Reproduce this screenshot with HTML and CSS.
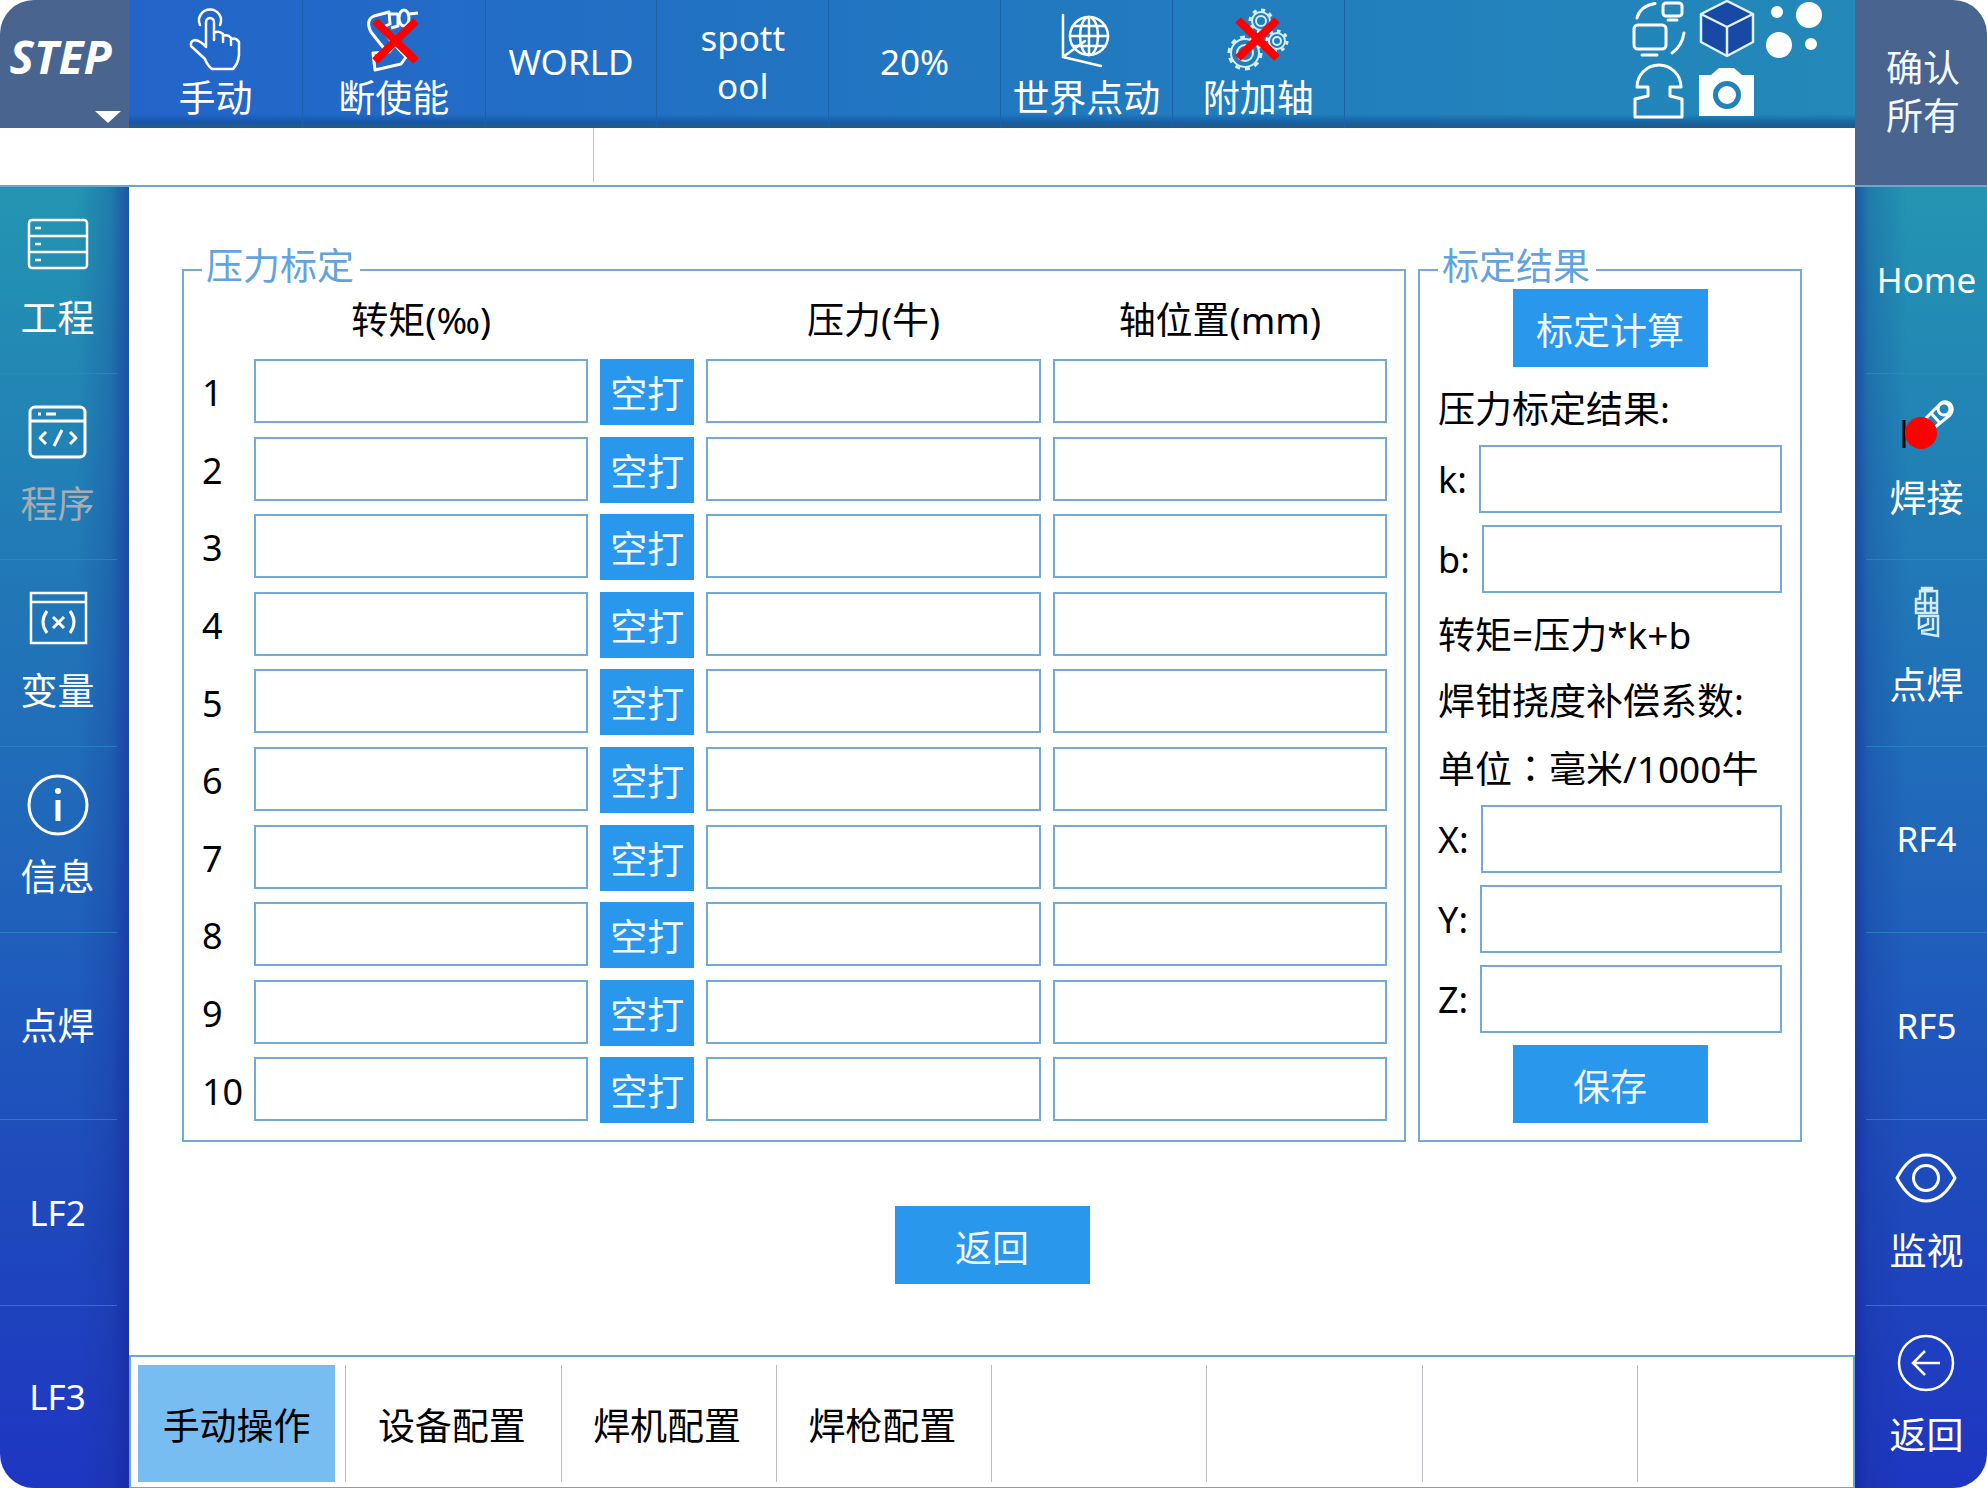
FILE: index.html
```html
<!DOCTYPE html>
<html lang="zh-CN">
<head>
<meta charset="utf-8">
<meta name="viewport" content="width=device-width, initial-scale=1">
<title>压力标定</title>
<link rel="stylesheet" href="styles.css">
</head>
<body>
<div class="pendant">
  <button class="brand" type="button">STEP<svg class="brand-caret" viewBox="0 0 26 12" aria-hidden="true"><path d="M0 0h26L13 12z" fill="#fff"/></svg></button>

  <header class="topbar">
    <button class="top-cell" type="button">
      <svg class="icon" viewBox="0 0 64 64" fill="none" stroke="#fff" stroke-width="2.5" stroke-linejoin="round" stroke-linecap="round" aria-hidden="true"><path d="M17 18a11 11 0 1 1 20 0"/><path d="M23 40V15a4 4 0 0 1 8 0v16M31 33v-7q5-3 9 1v8M40 29q5-2 8 2v7M48 32q5-2 8 3v13q-1 9-6 14H29q-5-4-7-10L8 39q-1-5 4-6 6 1 11 7"/></svg>
      <span>手动</span>
    </button>
    <button class="top-cell" type="button">
      <svg class="icon" viewBox="0 0 64 64" fill="none" stroke="#fff" stroke-width="3" stroke-linejoin="round" aria-hidden="true"><path d="M9 25Q3 13 12 9l15-4 1 12-9 4M9 25l15 19M28 7h8v12l-7 2M19 21l14 18M47 7l9-1M47 15l6 2"/><ellipse cx="42" cy="11" rx="5" ry="8"/><path d="M11 46l16-1 6-7 11 12-5 7-26 6z"/><path d="M13 14 54 54M54 14 13 54" stroke="#f00" stroke-width="8"/></svg>
      <span>断使能</span>
    </button>
    <button class="top-cell text-only" type="button"><span>WORLD</span></button>
    <button class="top-cell text-only" type="button"><span>spott<br>ool</span></button>
    <button class="top-cell text-only" type="button"><span>20%</span></button>
    <button class="top-cell" type="button">
      <svg class="icon" viewBox="0 0 64 64" fill="none" stroke="#fff" stroke-width="2.5" stroke-linecap="round" aria-hidden="true"><path d="M9 8v42l38 9M9 50l22-16"/><circle cx="35" cy="29" r="19"/><ellipse cx="35" cy="29" rx="9" ry="19"/><path d="M35 10v38M16 29h38M19 19h32M19 39h32"/></svg>
      <span>世界点动</span>
    </button>
    <button class="top-cell" type="button">
      <svg class="icon" viewBox="0 0 64 64" fill="none" stroke="#d6eef8" aria-hidden="true"><g stroke-width="2"><circle cx="35" cy="14" r="9"/><circle cx="35" cy="14" r="5"/><circle cx="51" cy="34" r="8"/><circle cx="51" cy="34" r="4"/><circle cx="19" cy="46" r="14"/><circle cx="19" cy="46" r="8"/></g><g stroke-width="3"><circle cx="35" cy="14" r="11" stroke-dasharray="4 4.6"/><circle cx="51" cy="34" r="10" stroke-dasharray="3.5 4.3"/><circle cx="19" cy="46" r="16" stroke-dasharray="5 5"/></g><path d="M12 13 51 51M51 13 12 51" stroke="#f00" stroke-width="8"/></svg>
      <span>附加轴</span>
    </button>
    <div class="status">
      <svg class="status-icon" viewBox="0 0 56 58" fill="none" stroke="#fff" stroke-width="3" stroke-linecap="round" stroke-linejoin="round" aria-hidden="true"><rect x="2" y="25" width="32" height="24" rx="4"/><path d="M10 55h15M5 18Q8 6 23 3.500M52 33Q50 46 40 53"/><rect x="31" y="3" width="19" height="13" rx="3"/><path d="M36 20h9"/></svg>
      <svg class="status-icon" viewBox="0 0 56 58" fill="#1749a5" stroke="#dff2fb" stroke-width="2.500" stroke-linejoin="round" aria-hidden="true"><path d="M28 1 54 14v28L28 56 2 42V14z"/><path d="M2 14 28 27 54 14M28 27v29"/></svg>
      <svg class="status-icon" viewBox="0 0 56 58" fill="#fff" aria-hidden="true"><circle cx="11" cy="12" r="6"/><circle cx="43" cy="15" r="13"/><circle cx="13" cy="45" r="13"/><circle cx="45" cy="44" r="6"/></svg>
      <svg class="status-icon" viewBox="0 0 56 58" fill="none" stroke="#fff" stroke-width="3" stroke-linejoin="round" aria-hidden="true"><path d="M5 25a22 22 0 0 1 44 0H38v9l12 3v18H3V37l13-3v-9z"/></svg>
      <svg class="status-icon" viewBox="0 0 56 58" aria-hidden="true"><path d="M0 13h12l8-7h15l8 7h12v41H0z" fill="#fff"/><circle cx="28" cy="33" r="11.500" fill="none" stroke="#2383b8" stroke-width="5"/></svg>
    </div>
  </header>

  <button class="confirm" type="button">确认<br>所有</button>

  <div class="messages"><div class="message-code"></div><div class="message-text"></div></div>

  <nav class="side side-left">
    <button class="side-cell has-icon" type="button">
      <svg class="icon" viewBox="0 0 64 64" fill="none" stroke="#fff" stroke-width="2.500" aria-hidden="true"><rect x="3" y="6" width="58" height="48" rx="3"/><path d="M3 22h58M3 38h58M9 14h6M9 30h6M9 46h6"/></svg>
      <span>工程</span>
    </button>
    <button class="side-cell has-icon" type="button" disabled>
      <svg class="icon" viewBox="0 0 64 64" fill="none" stroke="#fff" stroke-width="3" stroke-linejoin="round" aria-hidden="true"><rect x="4" y="7" width="55" height="50" rx="5"/><path d="M4 21h55M12 14h3M20 14h10M20 32l-6 6 6 6M44 32l6 6-6 6M36 30l-8 16"/></svg>
      <span>程序</span>
    </button>
    <button class="side-cell has-icon" type="button">
      <svg class="icon" viewBox="0 0 64 64" fill="none" stroke="#fff" stroke-width="2.500" aria-hidden="true"><rect x="5" y="6" width="55" height="50"/><path d="M5 15h55"/><path d="M21 24q-8 11 0 22M44 24q8 11 0 22M27 30l11 11M38 30 27 41" stroke-width="3"/></svg>
      <span>变量</span>
    </button>
    <button class="side-cell has-icon" type="button">
      <svg class="icon" viewBox="0 0 64 64" fill="none" stroke="#fff" stroke-width="3" aria-hidden="true"><circle cx="32" cy="32" r="29"/><path d="M32 27v21" stroke-width="5"/><circle cx="32" cy="18" r="3" fill="#fff" stroke="none"/></svg>
      <span>信息</span>
    </button>
    <button class="side-cell" type="button"><span>点焊</span></button>
    <button class="side-cell text-only" type="button"><span>LF2</span></button>
    <button class="side-cell text-only" type="button"><span>LF3</span></button>
  </nav>

  <main class="content">
    <form class="panels">
      <fieldset class="group group-samples">
        <legend>压力标定</legend>
        <table class="samples">
          <colgroup><col class="col-no"><col><col class="col-action"><col><col></colgroup>
          <thead><tr><td></td><th scope="col">转矩(‰)</th><td></td><th scope="col">压力(牛)</th><th scope="col">轴位置(mm)</th></tr></thead>
          <tbody>
            <tr><th scope="row">1</th><td><input type="text" aria-label="转矩 1"></td><td><button type="button">空打</button></td><td><input type="text" aria-label="压力 1"></td><td><input type="text" aria-label="轴位置 1"></td></tr>
            <tr><th scope="row">2</th><td><input type="text" aria-label="转矩 2"></td><td><button type="button">空打</button></td><td><input type="text" aria-label="压力 2"></td><td><input type="text" aria-label="轴位置 2"></td></tr>
            <tr><th scope="row">3</th><td><input type="text" aria-label="转矩 3"></td><td><button type="button">空打</button></td><td><input type="text" aria-label="压力 3"></td><td><input type="text" aria-label="轴位置 3"></td></tr>
            <tr><th scope="row">4</th><td><input type="text" aria-label="转矩 4"></td><td><button type="button">空打</button></td><td><input type="text" aria-label="压力 4"></td><td><input type="text" aria-label="轴位置 4"></td></tr>
            <tr><th scope="row">5</th><td><input type="text" aria-label="转矩 5"></td><td><button type="button">空打</button></td><td><input type="text" aria-label="压力 5"></td><td><input type="text" aria-label="轴位置 5"></td></tr>
            <tr><th scope="row">6</th><td><input type="text" aria-label="转矩 6"></td><td><button type="button">空打</button></td><td><input type="text" aria-label="压力 6"></td><td><input type="text" aria-label="轴位置 6"></td></tr>
            <tr><th scope="row">7</th><td><input type="text" aria-label="转矩 7"></td><td><button type="button">空打</button></td><td><input type="text" aria-label="压力 7"></td><td><input type="text" aria-label="轴位置 7"></td></tr>
            <tr><th scope="row">8</th><td><input type="text" aria-label="转矩 8"></td><td><button type="button">空打</button></td><td><input type="text" aria-label="压力 8"></td><td><input type="text" aria-label="轴位置 8"></td></tr>
            <tr><th scope="row">9</th><td><input type="text" aria-label="转矩 9"></td><td><button type="button">空打</button></td><td><input type="text" aria-label="压力 9"></td><td><input type="text" aria-label="轴位置 9"></td></tr>
            <tr><th scope="row">10</th><td><input type="text" aria-label="转矩 10"></td><td><button type="button">空打</button></td><td><input type="text" aria-label="压力 10"></td><td><input type="text" aria-label="轴位置 10"></td></tr>
          </tbody>
        </table>
      </fieldset>

      <fieldset class="group">
        <legend>标定结果</legend>
        <div class="results">
          <button class="action" type="button">标定计算</button>
          <p>压力标定结果:</p>
          <div class="field"><label for="k">k:</label><input id="k" type="text"></div>
          <div class="field"><label for="b">b:</label><input id="b" type="text"></div>
          <p>转矩=压力*k+b</p>
          <p>焊钳挠度补偿系数:</p>
          <p>单位<span class="wide-colon" lang="zh-TW">：</span>毫米/1000牛</p>
          <div class="field"><label for="x">X:</label><input id="x" type="text"></div>
          <div class="field"><label for="y">Y:</label><input id="y" type="text"></div>
          <div class="field"><label for="z">Z:</label><input id="z" type="text"></div>
          <button class="action" type="button">保存</button>
        </div>
      </fieldset>
    </form>
    <button class="action back" type="button">返回</button>

    <nav class="tabs">
      <button class="tab is-active" type="button"><span>手动操作</span></button>
      <button class="tab" type="button"><span>设备配置</span></button>
      <button class="tab" type="button"><span>焊机配置</span></button>
      <button class="tab" type="button"><span>焊枪配置</span></button>
      <div class="tab"></div>
      <div class="tab"></div>
      <div class="tab"></div>
      <div class="tab"></div>
    </nav>
  </main>

  <nav class="side side-right">
    <button class="side-cell text-only" type="button"><span>Home</span></button>
    <button class="side-cell has-icon" type="button">
      <svg class="icon icon-short" viewBox="0 6 64 52" fill="none" stroke="#fff" stroke-width="3" stroke-linejoin="round" aria-hidden="true"><path d="M31 18 46 3q6-3 10 2 3 5-1 10L39 28z"/><circle cx="49" cy="9" r="6"/><path d="M36 13l9 10"/><path d="M9 20v28" stroke="#000"/><circle cx="26" cy="33" r="16" fill="#f00" stroke="none"/></svg>
      <span>焊接</span>
    </button>
    <button class="side-cell has-icon" type="button">
      <svg class="icon icon-short" viewBox="0 6 64 52" fill="none" stroke="#d3ebf8" stroke-width="2.500" aria-hidden="true"><path d="M27 4V1h10v3z" fill="#fff"/><path d="M25 4h17v22H21V12h4zM21 16h21M30 4v22M36 10v16M21 22h9M36 21h6"/><path d="M23 29h20v20l-17-3M24 30v11l9-4v-6M26 44l12-2V31"/></svg>
      <span>点焊</span>
    </button>
    <button class="side-cell text-only" type="button"><span>RF4</span></button>
    <button class="side-cell text-only" type="button"><span>RF5</span></button>
    <button class="side-cell has-icon" type="button">
      <svg class="icon" viewBox="0 0 64 64" fill="none" stroke="#fff" stroke-width="3" stroke-linejoin="round" aria-hidden="true"><path d="M2 31Q14 8 31 8t29 23Q48 54 31 54T2 31z"/><circle cx="31" cy="31" r="12.500"/></svg>
      <span>监视</span>
    </button>
    <button class="side-cell has-icon" type="button">
      <svg class="icon" viewBox="0 0 64 64" fill="none" stroke="#fff" stroke-width="2.500" aria-hidden="true"><circle cx="31" cy="32" r="27"/><path d="M45 32H18M30 20 18 32l12 12"/></svg>
      <span>返回</span>
    </button>
  </nav>
</div>
</body>
</html>
```

FILE: styles.css
```css
* {
  box-sizing: border-box;
}

body {
  margin: 0;
  background: #fff;
  color: #000;
  font: 37px/44px "Noto Sans", "Noto Sans CJK SC", sans-serif;
}

button,
input {
  font: inherit;
  color: inherit;
}

button {
  margin: 0;
  padding: 0;
  border: 0;
  background: none;
}

.pendant {
  display: grid;
  grid-template-columns: 129px minmax(0, 1fr) 132px;
  grid-template-rows: 128px 59px 1fr;
  min-height: 100vh;
  border-radius: 34px;
  overflow: hidden;
}

.icon {
  display: block;
  width: 64px;
  height: 64px;
  overflow: visible;
}

.icon-short {
  height: 52px;
}

/* Top bar */

.brand {
  display: flex;
  flex-direction: column;
  align-items: center;
  justify-content: space-between;
  padding: 34px 8px 5px 0;
  background: #48648f;
  color: #fff;
  font: italic 700 46px/44px "Noto Sans", sans-serif;
}

.brand-caret {
  width: 26px;
  height: 12px;
  align-self: flex-end;
}

.topbar {
  display: grid;
  grid-template-columns: 174fr 183fr repeat(5, 172fr) 511fr;
  background:
    linear-gradient(to bottom, transparent 114px, rgba(10, 70, 140, 0.5) 122px, #225a8c 126px),
    linear-gradient(to right, #2364ca, #2178c0 50%, #2389b8);
  color: #fff;
}

.top-cell {
  display: flex;
  flex-direction: column;
  align-items: center;
  justify-content: center;
  gap: 3px;
  border-right: 1px solid #1c60a8;
  line-height: 48px;
}

.text-only {
  font-size: 35px;
}

.top-cell.text-only {
  padding-bottom: 4px;
}

.status {
  display: grid;
  grid-template-columns: repeat(3, 56px);
  grid-auto-rows: 58px;
  gap: 4px 11px;
  justify-content: end;
  padding-right: 33px;
}

.status-icon {
  display: block;
  width: 56px;
  height: 58px;
}

.confirm {
  grid-row: 1 / 3;
  grid-column: 3;
  padding: 0 0 2px 4px;
  border-bottom: 2px solid #6ba6cf;
  background: #48648f;
  color: #f2f7ff;
  line-height: 48px;
}

.messages {
  display: flex;
  grid-row: 2;
  grid-column: 1 / 3;
  padding-bottom: 3px;
  border-bottom: 2px solid #6ba6cf;
}

.message-code {
  width: 32%;
  border-right: 1px solid #c4c4c8;
}

.message-text {
  flex: 1;
}

/* Side key columns */

.side {
  display: grid;
  grid-template-rows: repeat(6, 187fr) 182fr;
  grid-row: 3;
}

.side-left {
  grid-column: 1;
  padding-right: 12px;
  background:
    linear-gradient(to left, rgba(22, 36, 150, 0.55), rgba(22, 40, 150, 0.4) 10px, rgba(22, 50, 150, 0.25) 18px, transparent 52px),
    linear-gradient(to bottom, #2395b2, #2178b6 30%, #2065bb 52%, #1e4cbb 75%, #1e36c2);
}

.side-right {
  grid-column: 3;
  padding-left: 11px;
  background:
    linear-gradient(to right, rgba(22, 36, 150, 0.55), rgba(22, 40, 150, 0.4) 7px, rgba(22, 50, 150, 0.25) 14px, transparent 52px),
    linear-gradient(to bottom, #2395b2, #2178b6 30%, #2065bb 52%, #1e4cbb 75%, #1e36c2);
}

.side-cell {
  display: flex;
  flex-direction: column;
  align-items: center;
  justify-content: center;
  border-bottom: 1px solid rgba(45, 140, 195, 0.7);
  color: #fff;
}

.side-left .side-cell {
  padding-right: 2px;
}

.side-cell:last-child {
  border-bottom: 0;
}

.has-icon {
  gap: 18px;
  padding-bottom: 6px;
}

.side-cell:disabled {
  color: #a6adb3;
}

/* Calibration page */

.content {
  display: flex;
  flex-direction: column;
  grid-row: 3;
  grid-column: 2;
}

.panels {
  display: grid;
  grid-template-columns: minmax(0, 1fr) 384px;
  gap: 12px;
  padding: 64px 53px 0;
}

.group {
  min-width: 0;
  margin: 0;
  padding: 0 18px 17px;
  border: 2px solid #74aad6;
}

.group legend {
  padding: 0 6px 8px 4px;
  color: #62a3dd;
  line-height: 30px;
}

.group-samples {
  display: grid;
  padding: 0 5px 5px 4px;
}

.group-samples legend {
  margin-left: 14px;
}

.samples {
  width: 100%;
  height: 100%;
  table-layout: fixed;
  border-collapse: separate;
  border-spacing: 12px 11px;
}

.samples th,
.samples td {
  padding: 0;
  font-weight: 400;
}

.samples thead th {
  height: 48px;
  padding-bottom: 8px;
  line-height: 40px;
}

.samples tbody th {
  padding: 2px 0 0 2px;
  font-size: 36px;
  text-align: left;
}

.samples tbody td {
  vertical-align: top;
}

.col-no {
  width: 42px;
}

.col-action {
  width: 94px;
}

input {
  display: block;
  width: 100%;
  min-width: 0;
  height: 64px;
  padding: 0 8px;
  border: 2px solid #74aad6;
  border-radius: 0;
  background: #fff;
}

.samples button,
.action {
  display: block;
  background: #2997ec;
  color: #eff8ff;
}

.samples button {
  width: 100%;
  height: 66px;
  padding-top: 4px;
}

.action {
  width: 195px;
  height: 78px;
  padding-top: 5px;
  align-self: center;
}

.results {
  display: flex;
  flex-direction: column;
  gap: 12px;
}

.results p {
  margin: 0;
  padding-top: 6px;
  line-height: 48px;
  white-space: nowrap;
}

.wide-colon {
  font-family: "Noto Sans CJK TC", sans-serif;
}

.field {
  display: flex;
  align-items: center;
  gap: 12px;
}

.field label {
  padding-top: 2px;
  font-size: 36px;
}

.field input {
  flex: 1;
  height: 68px;
}

.back {
  margin: 64px 0;
}

/* Page tabs */

.tabs {
  display: grid;
  grid-template-columns: repeat(8, 1fr);
  height: 133px;
  margin-top: auto;
  padding: 8px 0 5px;
  border: 2px solid #6ba6cf;
  border-bottom-width: 1px;
}

.tab {
  display: grid;
  padding: 0 10px 0 7px;
  border-right: 1px solid #bcbcc2;
}

.tab:last-child {
  border-right: 0;
}

.tab span {
  display: grid;
  align-content: center;
  justify-content: center;
  padding-top: 4px;
}

.is-active span {
  background: #78bdf2;
}
```
